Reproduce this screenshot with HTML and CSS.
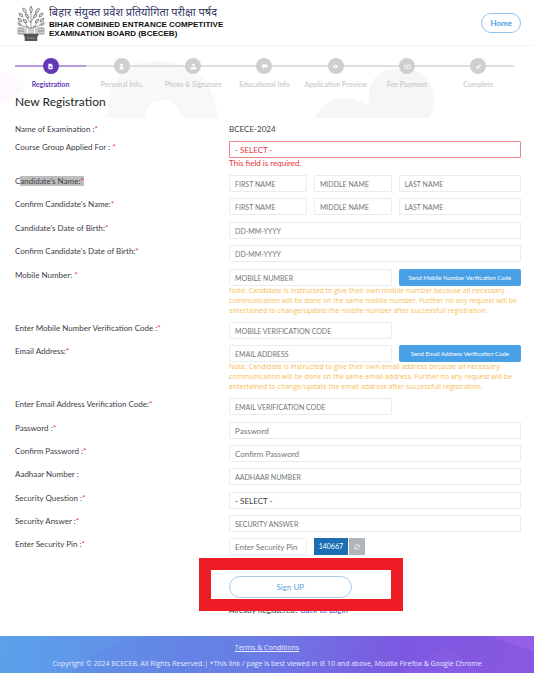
FILE: index.html
```html
<!DOCTYPE html>
<html lang="en">
<head>
  <meta charset="UTF-8"/>
  <meta name="viewport" content="width=device-width, initial-scale=1"/>
  <title>BCECEB - New Registration</title>
  <link rel="stylesheet" href="styles.css">
</head>
<body>
  <header class="site-header">
    <div class="brand">
      <svg class="logo" viewBox="0 0 28 36" fill="none" stroke="#5a5a5a" stroke-width="0.6">
        <path d="M14 31V5M14 24Q9 22 7 15M14 23Q20 21 21 14M14 18Q9 14 9 7M14 17Q18 13 19 6M11 22Q5 22 3 19M17 22Q22 22 25 18"/>
        <g fill="#ddd">
          <path d="M14 8Q11 5 14 1Q17 5 14 8ZM9 8Q5 7 6 3Q10 4 9 8ZM19 8Q18 4 22 3Q23 7 19 8ZM6 12Q2 12 2 8Q6 8 6 12ZM22 12Q22 8 26 8Q26 12 22 12ZM12 13Q8 13 8 9Q12 9 12 13ZM16 13Q16 9 20 9Q20 13 16 13ZM5 17Q1 17 1 13Q5 13 5 17ZM23 17Q23 13 27 13Q27 17 23 17ZM10 18Q6 18 6 14Q10 14 10 18ZM18 18Q18 14 22 14Q22 18 18 18ZM4 21Q0 20 1 17Q4 18 4 21ZM24 21Q24 18 27 17Q28 20 24 21Z"/>
        </g>
        <path d="M9 29V23Q11 20 12 23V29M16 29V23Q17 20 19 23V29"/>
        <path d="M1 23H7V29H1ZM3 23V29M5 23V29M1 26H7M21 23H27V29H21ZM23 23V29M25 23V29M21 26H27"/>
        <path d="M7 29H21V31H20V36H8V31H7Z" fill="#555"/>
        <path d="M10 33H18" stroke="#bbb"/>
      </svg>
      <div class="brand-text">
        <p class="brand-hi" lang="hi">बिहार संयुक्त प्रवेश प्रतियोगिता परीक्षा पर्षद</p>
        <p class="brand-en">BIHAR COMBINED ENTRANCE COMPETITIVE<br>EXAMINATION BOARD (BCECEB)</p>
      </div>
    </div>
    <a class="home-btn" href="#">Home</a>
  </header>

  <main class="page">
    <svg class="backdrop" viewBox="0 0 534 72" preserveAspectRatio="none">
      <path d="M0 26Q22 30 26 40Q20 54 0 56Z" fill="#fdf9fe"/>
      <path d="M107 72Q109 15 157 15Q211 15 218 72H181Q179 54 163 54Q147 54 145 72Z" fill="#f8f8f8"/>
      <path d="M315 72Q325 52 346 52Q358 52 369 61Q365 23 400 22Q434 23 434 57Q434 66 429 72Z" fill="#f6f6f6"/>
    </svg>

    <ol class="steps">
      <li class="step active">
        <span class="dot"><svg viewBox="0 0 10 10"><path d="M2 1h4l2 2v6H2zM4 4v3h2V5H4z" fill="#fff" fill-rule="evenodd"/></svg></span>
        Registration
      </li>
      <li class="step">
        <span class="dot"><svg viewBox="0 0 10 10"><circle cx="5" cy="3" r="2" fill="#fff"/><path d="M2 9Q2 5 5 5Q8 5 8 9Z" fill="#fff"/></svg></span>
        Personal Info.
      </li>
      <li class="step">
        <span class="dot"><svg viewBox="0 0 10 10"><circle cx="5" cy="3" r="2" fill="#fff"/><path d="M1 6h8v3H1z" fill="#fff"/></svg></span>
        Photo &amp; Signature
      </li>
      <li class="step">
        <span class="dot"><svg viewBox="0 0 10 10"><path d="M1 2h8v4H5L3 9V6H1z" fill="#fff"/></svg></span>
        Educational Info
      </li>
      <li class="step">
        <span class="dot"><svg viewBox="0 0 10 10"><path d="M1 5Q5 0 9 5Q5 10 1 5Z" fill="#fff"/><circle cx="5" cy="5" r="1" fill="#ccc"/></svg></span>
        Application Preview
      </li>
      <li class="step">
        <span class="dot"><svg viewBox="0 0 10 10"><path d="M1 3h8v5H1z" fill="none" stroke="#fff"/><circle cx="5" cy="5.500" r="1.200" fill="#fff"/></svg></span>
        Fee Payment
      </li>
      <li class="step">
        <span class="dot"><svg viewBox="0 0 10 10"><path d="M2 5l2 2 4-4" fill="none" stroke="#fff" stroke-width="2"/></svg></span>
        Complete
      </li>
    </ol>

    <h1>New Registration</h1>

    <form class="form">
      <div class="section">
        <div class="row">
          <span class="label">Name of Examination :<i>*</i></span>
          <span class="value">BCECE-2024</span>
        </div>
        <div class="row">
          <label for="course">Course Group Applied For : <i>*</i></label>
          <div class="fields">
            <select id="course" class="wide invalid"><option>- SELECT -</option></select>
            <p class="error">This field is required.</p>
          </div>
        </div>
      </div>

      <div class="section">
        <div class="row">
          <label for="first"><span>C<mark>andidate's Name:<i>*</i></mark></span></label>
          <div class="fields">
            <input id="first" type="text" placeholder="FIRST NAME">
            <input type="text" placeholder="MIDDLE NAME" aria-label="Middle name">
            <input type="text" placeholder="LAST NAME" aria-label="Last name">
          </div>
        </div>
        <div class="row">
          <label for="cfirst">Confirm Candidate's Name:<i>*</i></label>
          <div class="fields">
            <input id="cfirst" type="text" placeholder="FIRST NAME">
            <input type="text" placeholder="MIDDLE NAME" aria-label="Confirm middle name">
            <input type="text" placeholder="LAST NAME" aria-label="Confirm last name">
          </div>
        </div>
      </div>

      <div class="section">
        <div class="row">
          <label for="dob">Candidate's Date of Birth:<i>*</i></label>
          <div class="fields"><input id="dob" class="wide" type="text" placeholder="DD-MM-YYYY"></div>
        </div>
        <div class="row">
          <label for="cdob">Confirm Candidate's Date of Birth:<i>*</i></label>
          <div class="fields"><input id="cdob" class="wide" type="text" placeholder="DD-MM-YYYY"></div>
        </div>
      </div>

      <div class="section">
        <div class="row">
          <label for="mobile">Mobile Number: <i>*</i></label>
          <div class="fields">
            <input id="mobile" class="half" type="tel" placeholder="MOBILE NUMBER">
            <button type="button" class="send-btn">Send Mobile Number Verification Code</button>
            <p class="note">Note: Candidate is instructed to give their own mobile number because all necessary communication will be done on the same mobile number. Further no any request will be entertained to change/update the mobile number after successfull registration.</p>
          </div>
        </div>
        <div class="row">
          <label for="mcode">Enter Mobile Number Verification Code :<i>*</i></label>
          <div class="fields"><input id="mcode" class="half" type="text" placeholder="MOBILE VERIFICATION CODE"></div>
        </div>
        <div class="row">
          <label for="email">Email Address:<i>*</i></label>
          <div class="fields">
            <input id="email" class="half" type="email" placeholder="EMAIL ADDRESS">
            <button type="button" class="send-btn">Send Email Address Verification Code</button>
            <p class="note">Note: Candidate is instructed to give their own email address because all necessary communication will be done on the same email address. Further no any request will be entertained to change/update the email address after successfull registration.</p>
          </div>
        </div>
        <div class="row">
          <label for="ecode">Enter Email Address Verification Code:<i>*</i></label>
          <div class="fields"><input id="ecode" class="half" type="text" placeholder="EMAIL VERIFICATION CODE"></div>
        </div>
      </div>

      <div class="section">
        <div class="row">
          <label for="pass">Password :<i>*</i></label>
          <div class="fields"><input id="pass" class="wide mixed" type="password" placeholder="Password"></div>
        </div>
        <div class="row">
          <label for="cpass">Confirm Password :<i>*</i></label>
          <div class="fields"><input id="cpass" class="wide mixed" type="password" placeholder="Confirm Password"></div>
        </div>
        <div class="row">
          <label for="aadhaar">Aadhaar Number :</label>
          <div class="fields"><input id="aadhaar" class="wide" type="text" placeholder="AADHAAR NUMBER"></div>
        </div>
      </div>

      <div class="section">
        <div class="row">
          <label for="question">Security Question :<i>*</i></label>
          <div class="fields"><select id="question" class="wide"><option>- SELECT -</option></select></div>
        </div>
        <div class="row">
          <label for="answer">Security Answer :<i>*</i></label>
          <div class="fields"><input id="answer" class="wide" type="text" placeholder="SECURITY ANSWER"></div>
        </div>
        <div class="row">
          <label for="pin">Enter Security Pin :<i>*</i></label>
          <div class="fields">
            <input id="pin" class="mixed" type="text" placeholder="Enter Security Pin">
            <div class="captcha">
              <span class="captcha-code">140667</span>
              <button type="button" class="refresh" aria-label="Refresh">
                <svg viewBox="0 0 10 10" fill="none" stroke="#fff" stroke-width="1.200"><path d="M1 4Q2 1 5 1Q7 1 8 3M9 1V4H6M9 6Q8 9 5 9Q3 9 2 7M1 9V6H4"/></svg>
              </button>
            </div>
          </div>
        </div>
      </div>

      <div class="row submit-row">
        <div class="submit">
          <button type="submit" class="signup">Sign UP</button>
          <p class="already">Already Registered? <a href="#">Back to Login</a></p>
          <div class="highlight"></div>
        </div>
      </div>
    </form>
  </main>

  <footer class="site-footer">
    <svg class="footer-shapes" viewBox="0 0 534 37" preserveAspectRatio="none">
      <path d="M70 37Q100 8 145 0H230L260 37Z" fill="#5b6fe0" opacity="0.150"/>
      <path d="M400 37L448 10L480 37Z" fill="#9a6cf0" opacity="0.200"/>
      <path d="M490 0L534 16V0Z" fill="#a86cf0" opacity="0.400"/>
    </svg>
    <a href="#">Terms &amp; Conditions</a>
    <p>Copyright © 2024 BCECEB. All Rights Reserved.| *This link / page is best viewed in IE 10 and above, Mozilla Firefox &amp; Google Chrome</p>
  </footer>
</body>
</html>
```
FILE: styles.css
```css
/* COLOR VARIABLES */
:root {
  --text: #3c3c46;
  --muted: #757575;
  --line: #e9ecef;
  --blue: #48a0e6;
  --purple: #6439b5;
  --red: #e8333c;
  --gray: #cfcfcf;
}

/* RESET */
* { box-sizing:border-box; margin:0; padding:0 }
body {
  min-height:100vh;
  display:flex;
  flex-direction:column;
  font-family:Lato,"Noto Sans",sans-serif;
  font-size:8px;
  line-height:12px;
  color:var(--text);
  background:#fff;
}
input, select, button { font:inherit; color:inherit }

/* HEADER */
.site-header {
  display:flex;
  justify-content:space-between;
  align-items:center;
  height:46px;
  padding:0 13px 0 17px;
  border-bottom:1px solid #f4f4f4;
}
.brand { display:flex; align-items:center; gap:4px }
.logo { width:28px; height:36px }
.brand-hi {
  font-family:"Noto Sans Devanagari","Noto Sans",sans-serif;
  font-size:11px;
  line-height:13px;
  color:#353565;
}
.brand-en {
  font-family:"Liberation Sans",sans-serif;
  font-size:8px;
  line-height:9px;
  font-weight:700;
  color:#111;
}
.home-btn {
  padding:1px 8px;
  border:1px solid #8fc3ee;
  border-radius:10px;
  line-height:16px;
  font-weight:700;
  color:var(--blue);
  text-decoration:none;
}

/* STEPS */
.page {
  flex:1;
  position:relative;
  padding:12px 13px 0 15px;
}
.backdrop {
  position:absolute;
  top:0; left:0;
  width:100%;
  height:72px;
  z-index:-1;
}
.steps {
  display:flex;
  list-style:none;
  margin-right:7px;
}
.step {
  flex:1 1 0;
  display:flex;
  flex-direction:column;
  align-items:center;
  gap:4px;
  font-size:7px;
  font-weight:700;
  white-space:nowrap;
  color:var(--gray);
  background:linear-gradient(#dedede,#dedede) 0 7px / 100% 2px no-repeat;
}
.step.active {
  color:var(--purple);
  background-image:linear-gradient(#b39ddb,#b39ddb);
}
.dot {
  display:grid;
  place-items:center;
  width:16px;
  height:16px;
  border-radius:50%;
  background:var(--gray);
}
.active .dot { background:var(--purple) }
.dot svg { width:7px; height:7px }

h1 {
  margin:4px 0 13px;
  font-size:12px;
  line-height:16px;
  font-weight:400;
  color:#222;
}

/* FORM */
.form, .section { display:flex; flex-direction:column }
.form { gap:7px }
.section { gap:6px }
.row {
  display:grid;
  grid-template-columns:11fr 15fr;
  align-items:start;
}
label i, .label i { color:var(--red); font-style:normal }
mark { background:#bdbdbd; color:inherit }
.fields {
  display:grid;
  grid-template-columns:7fr 7fr 11fr;
  column-gap:7px;
}
.fields input, .fields select {
  width:100%;
  min-width:0;
  height:17px;
  padding:0 5px;
  border:1px solid var(--line);
  border-radius:1px;
  background:#fff;
  appearance:none;
  outline:none;
}
.fields input { font-size:7px }
.fields .mixed { font-size:8px }
.fields input::placeholder { color:var(--muted); opacity:1 }
.fields .wide, .note, .error { grid-column:1 / -1 }
.fields .half { grid-column:span 2 }
.fields .invalid { border-color:#f0828a; color:var(--red) }
.error { line-height:10px; color:var(--red) }
.note, .site-footer {
  font-family:"Open Sans","Noto Sans",sans-serif;
  font-size:7px;
}
.note { line-height:10px; color:#f8bd55 }
.send-btn {
  height:17px;
  border:0;
  border-radius:2px;
  background:var(--blue);
  color:#fff;
  font-size:6px;
  white-space:nowrap;
}

/* CAPTCHA */
.captcha { display:flex; gap:1px }
.captcha-code {
  width:34px;
  font-size:7px;
  line-height:17px;
  text-align:center;
  background:#1c6fb2;
  color:#fff;
}
.refresh {
  display:grid;
  place-items:center;
  width:16px;
  height:17px;
  border:0;
  background:#b0b5ba;
}
.refresh svg { width:6px; height:6px }

/* SUBMIT */
.submit-row { margin-top:14px }
.submit {
  grid-column:2;
  position:relative;
}
.signup {
  display:block;
  width:42%;
  height:22px;
  border:1px solid #a9cdec;
  border-radius:11px;
  background:#fff;
  color:#5b9fdc;
}
.already { margin-top:6px }
.already a { color:#5548c8; text-decoration:none }
.highlight {
  position:absolute;
  top:-18px;
  left:-30px;
  width:204px;
  height:53px;
  border:12px solid #ee1c25;
  pointer-events:none;
}

/* FOOTER */
.site-footer {
  position:relative;
  display:flex;
  flex-direction:column;
  align-items:center;
  gap:4px;
  padding:6px 8px 3px;
  text-align:center;
  color:#e6e9fc;
  background:linear-gradient(100deg,#5aa2ea,#6a80e6 45%,#7c58e0 75%,#8a58e2);
}
.footer-shapes {
  position:absolute;
  inset:0;
  width:100%;
  height:100%;
}
.site-footer a, .site-footer p { position:relative; color:inherit }
```
